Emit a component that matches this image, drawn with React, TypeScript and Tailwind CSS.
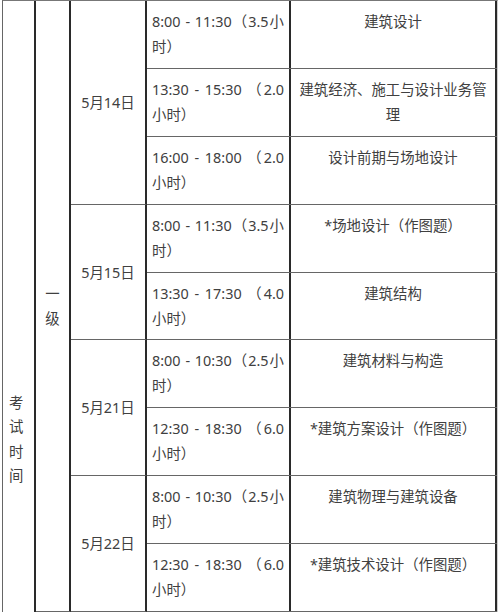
import React from "react";

type Session = { time: string; subject: string };
type Day = { date: string; sessions: Session[] };

const days: Day[] = [
  {
    date: "5月14日",
    sessions: [
      { time: "8:00 - 11:30（3.5小时）", subject: "建筑设计" },
      { time: "13:30 - 15:30 （2.0小时）", subject: "建筑经济、施工与设计业务管理" },
      { time: "16:00 - 18:00 （2.0小时）", subject: "设计前期与场地设计" },
    ],
  },
  {
    date: "5月15日",
    sessions: [
      { time: "8:00 - 11:30（3.5小时）", subject: "*场地设计（作图题）" },
      { time: "13:30 - 17:30 （4.0小时）", subject: "建筑结构" },
    ],
  },
  {
    date: "5月21日",
    sessions: [
      { time: "8:00 - 10:30（2.5小时）", subject: "建筑材料与构造" },
      { time: "12:30 - 18:30 （6.0小时）", subject: "*建筑方案设计（作图题）" },
    ],
  },
  {
    date: "5月22日",
    sessions: [
      { time: "8:00 - 10:30（2.5小时）", subject: "建筑物理与建筑设备" },
      { time: "12:30 - 18:30 （6.0小时）", subject: "*建筑技术设计（作图题）" },
    ],
  },
];

export default function App() {
  return (
    <div
      className="w-[500px] h-[612px] overflow-hidden bg-white text-[#404040] text-[14.4px] leading-[25px]"
      style={{ fontFamily: '"Noto Sans", "Noto Sans CJK SC", sans-serif' }}
    >
      <div className="ml-[2px] w-[496px] flex border-t border-l border-r border-t-[#777] border-l-[#666] border-r-[#cfcfcf]">
        {/* 考试时间 */}
        <div className="w-[33px] shrink-0 border-r-2 border-[#2a2a2a] pl-[6px] pt-[390px] leading-[24.4px]">
          {"考试时间".split("").map((c, i) => (
            <div key={i}>{c}</div>
          ))}
        </div>
        {/* 一级 */}
        <div className="w-[35px] shrink-0 border-r-2 border-b border-r-[#2a2a2a] border-b-[#666] flex flex-col items-center justify-center">
          <div>一</div>
          <div>级</div>
        </div>
        {/* days */}
        <div className="flex-1 flex flex-col">
          {days.map((d) => (
            <div key={d.date} className="flex">
              <div className="w-[76px] shrink-0 border-r-2 border-b border-r-[#2a2a2a] border-b-[#666] flex items-center justify-center">
                {d.date}
              </div>
              <div className="flex-1 flex flex-col">
                {d.sessions.map((s, i) => (
                  <div key={i} className="flex h-[67.9px] border-b border-[#666]">
                    <div className="w-[144px] shrink-0 border-r-2 border-[#2a2a2a] px-[5px] pt-[8px] text-justify">
                      {s.time}
                    </div>
                    <div className="flex-1 border-r-2 border-[#2a2a2a] px-[5px] pt-[8px] text-center">
                      {s.subject}
                    </div>
                  </div>
                ))}
              </div>
            </div>
          ))}
        </div>
      </div>
    </div>
  );
}
